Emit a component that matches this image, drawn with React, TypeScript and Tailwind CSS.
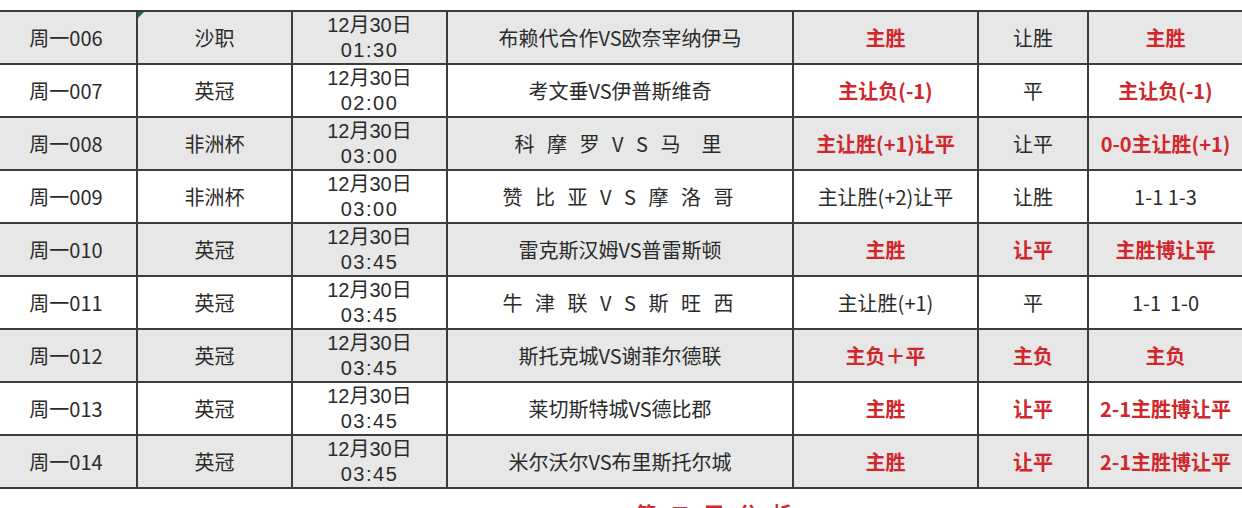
import React from "react";

type Cell = { t: string; red?: boolean };
type Row = {
  id: string;
  league: string;
  time: string;
  match: string;
  spaced?: boolean;
  a: Cell;
  b: Cell;
  c: Cell;
};

const rows: Row[] = [
  { id: "周一006", league: "沙职", time: "01:30", match: "布赖代合作VS欧奈宰纳伊马", a: { t: "主胜", red: true }, b: { t: "让胜" }, c: { t: "主胜", red: true } },
  { id: "周一007", league: "英冠", time: "02:00", match: "考文垂VS伊普斯维奇", a: { t: "主让负(-1)", red: true }, b: { t: "平" }, c: { t: "主让负(-1)", red: true } },
  { id: "周一008", league: "非洲杯", time: "03:00", match: "科 摩 罗 V S 马  里", spaced: true, a: { t: "主让胜(+1)让平", red: true }, b: { t: "让平" }, c: { t: "0-0主让胜(+1)", red: true } },
  { id: "周一009", league: "非洲杯", time: "03:00", match: "赞 比 亚 V S 摩 洛 哥", spaced: true, a: { t: "主让胜(+2)让平" }, b: { t: "让胜" }, c: { t: "1-1 1-3" } },
  { id: "周一010", league: "英冠", time: "03:45", match: "雷克斯汉姆VS普雷斯顿", a: { t: "主胜", red: true }, b: { t: "让平", red: true }, c: { t: "主胜博让平", red: true } },
  { id: "周一011", league: "英冠", time: "03:45", match: "牛 津 联 V S 斯 旺 西", spaced: true, a: { t: "主让胜(+1)" }, b: { t: "平" }, c: { t: "1-1  1-0" } },
  { id: "周一012", league: "英冠", time: "03:45", match: "斯托克城VS谢菲尔德联", a: { t: "主负＋平", red: true }, b: { t: "主负", red: true }, c: { t: "主负", red: true } },
  { id: "周一013", league: "英冠", time: "03:45", match: "莱切斯特城VS德比郡", a: { t: "主胜", red: true }, b: { t: "让平", red: true }, c: { t: "2-1主胜博让平", red: true } },
  { id: "周一014", league: "英冠", time: "03:45", match: "米尔沃尔VS布里斯托尔城", a: { t: "主胜", red: true }, b: { t: "让平", red: true }, c: { t: "2-1主胜博让平", red: true } },
];

const font = { fontFamily: '"Noto Sans CJK SC", "Noto Sans", sans-serif' };

function Txt({ c }: { c: Cell }) {
  return (
    <span
      className={
        c.red
          ? "whitespace-pre font-bold text-[#d0262c]"
          : "whitespace-pre text-[#2b2b2b]"
      }
    >
      {c.t}
    </span>
  );
}

export default function App() {
  return (
    <div className="h-[508px] w-[1242px] overflow-hidden bg-white" style={font}>
      <div className="relative mt-[10px] border-t-2 border-[#3c3c3c] text-[20px] leading-[24px]">
        {rows.map((r, i) => (
          <div
            key={r.id}
            className={
              "grid h-[53px] grid-cols-[138px_155px_155px_346px_185px_110px_1fr] border-b-2 border-[#3c3c3c] " +
              (i % 2 === 0 ? "bg-[#e6e7e6]" : "bg-white")
            }
          >
            <div className="flex items-center justify-center border-r-2 border-[#3c3c3c] pr-[4px] text-[#2b2b2b]">
              {r.id}
            </div>
            <div className="flex items-center justify-center border-r-2 border-[#3c3c3c] text-[#2b2b2b]">
              {r.league}
            </div>
            <div className="flex flex-col items-center justify-center border-r-2 border-[#3c3c3c] font-['Liberation_Sans','Noto_Sans_CJK_SC',sans-serif] text-[#2b2b2b]">
              <span className="leading-[25px]">12月30日</span>
              <span className="leading-[25px] tracking-[1.5px]">{r.time}</span>
            </div>
            <div className="flex items-center justify-center border-r-2 border-[#3c3c3c] text-[#2b2b2b]">
              <span className={r.spaced ? "whitespace-pre tracking-[4px]" : "whitespace-pre"}>{r.match}</span>
            </div>
            <div className="flex items-center justify-center border-r-2 border-[#3c3c3c]">
              <Txt c={r.a} />
            </div>
            <div className="flex items-center justify-center border-r-2 border-[#3c3c3c]">
              <Txt c={r.b} />
            </div>
            <div className="flex items-center justify-center">
              <Txt c={r.c} />
            </div>
          </div>
        ))}
        <div className="absolute left-[138px] top-0 h-0 w-0 border-r-[6px] border-t-[6px] border-r-transparent border-t-[#1f6b3a]" />
      </div>
      <div className="mt-[10px] flex justify-center pl-[200px]">
        <span className="text-[20px] font-bold tracking-[14px] text-[#d0262c]">第二天分析</span>
      </div>
    </div>
  );
}
